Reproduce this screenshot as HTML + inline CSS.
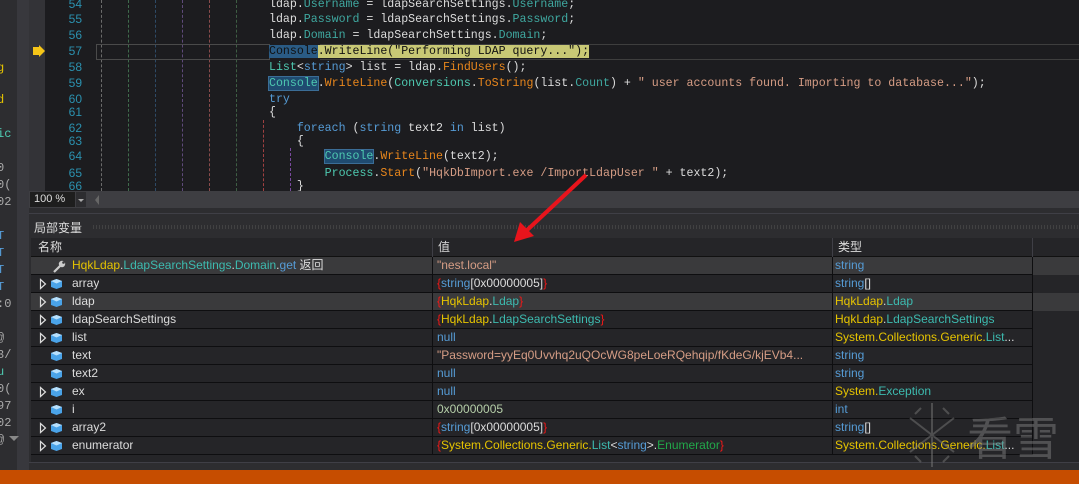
<!DOCTYPE html>
<html><head><meta charset="utf-8"><style>
*{margin:0;padding:0;box-sizing:border-box}
body{width:1079px;height:484px;overflow:hidden;background:#1c1c1f;position:relative;font-family:"Liberation Sans","Noto Sans CJK SC",sans-serif}
.a{position:absolute}
.code{position:absolute;left:269px;font:11.6px/15px "Liberation Mono","Noto Sans CJK SC",monospace;color:#dcdcdc;white-space:pre}
.num{position:absolute;left:50px;width:32px;text-align:right;font:12px/15px "Liberation Sans",sans-serif;color:#2b91af}
.k{color:#569cd6}.t{color:#4ec9b0}.p{color:#3fa8a0}.m{color:#e8861c}.s{color:#d69d85}
.hl{background:#1f4b70;outline:1px solid #3b6d96}
.g{position:absolute;top:0;height:191px;border-left:1px dashed}
.row{position:absolute;left:31px;width:1002px;height:18px;border-bottom:1px solid #0e0e10;font-size:12px;line-height:17px;color:#dcdcdc}
.c1,.c2,.c3{position:absolute;top:0;height:17px;white-space:nowrap;overflow:hidden}
.c1{left:41px}.c2{left:406px;width:396px}.c3{left:804px}
.sep1{position:absolute;left:401px;top:0;width:1px;height:18px;background:#0e0e10}
.sep2{position:absolute;left:801px;top:0;width:1px;height:18px;background:#0e0e10}
.y{color:#e6c400}.tq{color:#3dbbb0}.b{color:#569cd6}.r{color:#f21818}.gr{color:#22a84a}.st{color:#d69d85}
.ic{position:absolute;left:0;top:0}
</style></head><body>
<svg width="0" height="0" style="position:absolute"><defs>
<g id="cube"><path d="M20 6 L25.5 4 L31 6 L31 12 L25.5 14 L20 12 Z" fill="#4aa3e8"/><path d="M20 6 L25.5 4 L31 6 L25.5 8.5 Z" fill="#b8e0fc"/></g>
<g id="tri"><path d="M9.5 4.5 L14.5 9 L9.5 13.5 Z" fill="none" stroke="#ddd" stroke-width="1.2"/></g>
</defs></svg>
<div class="a" style="left:0;top:0;width:17px;height:470px;background:#2d2d30"></div>
<div class="a" style="left:17px;top:0;width:12px;height:470px;background:#38383d"></div>
<div class="a" style="left:0;top:0;width:17px;height:470px;font:12px/1 'Liberation Mono',monospace;overflow:hidden">
<div class="a" style="top:62px;left:-3px;color:#e6c400">g</div>
<div class="a" style="top:94px;left:-3px;color:#e6c400">d</div>
<div class="a" style="top:128px;left:-3px;color:#4ec9b0">ic</div>
<div class="a" style="top:162px;left:-3px;color:#aaa">0</div>
<div class="a" style="top:179px;left:-3px;color:#aaa">0(</div>
<div class="a" style="top:196px;left:-3px;color:#aaa">02</div>
<div class="a" style="top:230px;left:-3px;color:#569cd6">T</div>
<div class="a" style="top:247px;left:-3px;color:#569cd6">T</div>
<div class="a" style="top:264px;left:-3px;color:#569cd6">T</div>
<div class="a" style="top:281px;left:-3px;color:#569cd6">T</div>
<div class="a" style="top:298px;left:-3px;color:#aaa">:0</div>
<div class="a" style="top:332px;left:-3px;color:#aaa">@</div>
<div class="a" style="top:349px;left:-3px;color:#aaa">3/</div>
<div class="a" style="top:366px;left:-3px;color:#4ec9b0">u</div>
<div class="a" style="top:383px;left:-3px;color:#aaa">0(</div>
<div class="a" style="top:400px;left:-3px;color:#aaa">97</div>
<div class="a" style="top:417px;left:-3px;color:#aaa">02</div>
<div class="a" style="top:434px;left:-3px;color:#aaa">@</div>
</div>
<div class="a" style="left:9px;top:436px;border-top:5px solid #888;border-left:5px solid transparent;border-right:5px solid transparent"></div>
<div class="a" style="left:29px;top:0;width:16px;height:191px;background:#333337"></div>
<div class="a" style="left:33px;top:47px;width:6px;height:8px;background:#f5c518"></div>
<div class="a" style="left:39px;top:45px;border-left:6px solid #f5c518;border-top:6px solid transparent;border-bottom:6px solid transparent"></div>
<div class="g" style="left:101px;border-color:#6b6b6b"></div>
<div class="g" style="left:128px;border-color:#3f6b4c"></div>
<div class="g" style="left:155px;border-color:#2e4a66"></div>
<div class="g" style="left:182px;border-color:#5e4a7a"></div>
<div class="g" style="left:209px;border-color:#8a4b4b"></div>
<div class="g" style="left:236px;border-color:#3e5e44"></div>
<div class="a" style="left:263px;top:120px;height:71px;border-left:1px dashed #a04040"></div>
<div class="a" style="left:290px;top:148px;height:43px;border-left:1px dashed #7a4aa0"></div>
<div class="a" style="left:96px;top:44px;width:174px;height:16px;border:1px solid #4a4a4a"></div>
<div class="a" style="left:320px;top:44px;width:759px;height:16px;border-top:1px solid #3e3e3e;border-bottom:1px solid #3e3e3e"></div>
<div class="num" style="top:-3px">54</div><div class="num" style="top:12px">55</div><div class="num" style="top:28px">56</div><div class="num" style="top:44px">57</div><div class="num" style="top:60px">58</div><div class="num" style="top:76px">59</div><div class="num" style="top:92px">60</div><div class="num" style="top:105px">61</div><div class="num" style="top:121px">62</div><div class="num" style="top:134px">63</div><div class="num" style="top:149px">64</div><div class="num" style="top:166px">65</div><div class="num" style="top:179px">66</div>
<div class="code" style="top:-3px">ldap.<span class="p">Username</span> = ldapSearchSettings.<span class="p">Username</span>;</div>
<div class="code" style="top:12px">ldap.<span class="p">Password</span> = ldapSearchSettings.<span class="p">Password</span>;</div>
<div class="code" style="top:28px">ldap.<span class="p">Domain</span> = ldapSearchSettings.<span class="p">Domain</span>;</div>
<div class="code" style="top:44px;color:#111"><span style="background:#2a5b84">Console</span><span style="background:#c8c875">.WriteLine("Performing LDAP query...");</span></div>
<div class="code" style="top:60px"><span class="t">List</span>&lt;<span class="k">string</span>&gt; list = ldap.<span class="m">FindUsers</span>();</div>
<div class="code" style="top:76px"><span class="hl t">Console</span>.<span class="m">WriteLine</span>(<span class="t">Conversions</span>.<span class="m">ToString</span>(list.<span class="p">Count</span>) + <span class="s">" user accounts found. Importing to database..."</span>);</div>
<div class="code k" style="top:92px">try</div>
<div class="code" style="top:105px">{</div>
<div class="code" style="top:121px">    <span class="k">foreach</span> (<span class="k">string</span> text2 <span class="k">in</span> list)</div>
<div class="code" style="top:134px">    {</div>
<div class="code" style="top:149px">        <span class="hl t">Console</span>.<span class="m">WriteLine</span>(text2);</div>
<div class="code" style="top:166px">        <span class="t">Process</span>.<span class="m">Start</span>(<span class="s">"HqkDbImport.exe /ImportLdapUser "</span> + text2);</div>
<div class="code" style="top:179px">    }</div>
<div class="a" style="left:29px;top:191px;width:1050px;height:17px;background:#3e3e42"></div>
<div class="a" style="left:30px;top:192px;width:45px;height:15px;background:#1e1e1e;color:#ddd;font-size:11px;line-height:15px;padding-left:4px">100 %</div>
<div class="a" style="left:76px;top:192px;width:10px;height:15px;background:#2d2d30"></div>
<div class="a" style="left:78px;top:199px;border-top:3px solid #aaa;border-left:3px solid transparent;border-right:3px solid transparent"></div>
<div class="a" style="left:95px;top:195px;border-right:4px solid #666;border-top:5px solid transparent;border-bottom:5px solid transparent"></div>
<div class="a" style="left:29px;top:208px;width:1050px;height:262px;background:#2d2d30"></div>
<div class="a" style="left:29px;top:213px;width:1050px;height:1px;background:#3f3f46"></div>
<div class="a" style="left:34px;top:219px;color:#ddd;font-size:12px">局部变量</div>
<div class="a" style="left:92px;top:225px;width:987px;height:4px;background-image:radial-gradient(#555 0.6px,transparent 0.8px);background-size:3px 2px"></div>
<div class="a" style="left:31px;top:238px;width:1048px;height:224px;background:#252528"></div>
<div class="a" style="left:31px;top:238px;width:1048px;height:19px;background:#252528;border-bottom:1px solid #111;color:#ddd;font-size:12px;line-height:18px">
<span class="a" style="left:7px">名称</span><span class="a" style="left:407px">值</span><span class="a" style="left:807px">类型</span>
<div class="a" style="left:401px;top:0;width:1px;height:19px;background:#3f3f46"></div><div class="a" style="left:801px;top:0;width:1px;height:19px;background:#3f3f46"></div><div class="a" style="left:1001px;top:0;width:1px;height:19px;background:#3f3f46"></div></div>
<div class="a" style="left:31px;top:257px;width:1048px;height:18px;background:#3a3a3c"></div>
<div class="a" style="left:31px;top:293px;width:1048px;height:18px;background:#3a3a3c"></div>
<div class="a" style="left:1032px;top:257px;width:1px;height:198px;background:#0e0e10"></div>

<div class="row" style="top:257px"><svg class="ic" width="40" height="18"><path d="M23 15 L29 9" stroke="#ccc" stroke-width="2.2"/><circle cx="31" cy="7" r="3.2" fill="#ccc"/><circle cx="32.5" cy="5.5" r="1.3" fill="#3a3a3c"/></svg><div class="c1"><span class="y">HqkLdap</span>.<span class="tq">LdapSearchSettings</span>.<span class="tq">Domain</span>.<span class="b">get</span> 返回</div><div class="sep1"></div><div class="c2 st">"nest.local"</div><div class="sep2"></div><div class="c3 b">string</div></div>
<div class="row" style="top:275px"><svg class="ic" width="40" height="18"><use href="#tri"/><use href="#cube"/></svg><div class="c1">array</div><div class="sep1"></div><div class="c2"><span class="r">{</span><span class="b">string</span>[0x00000005]<span class="r">}</span></div><div class="sep2"></div><div class="c3 b">string<span style="color:#ddd">[]</span></div></div>
<div class="row" style="top:293px"><svg class="ic" width="40" height="18"><use href="#tri"/><use href="#cube"/></svg><div class="c1">ldap</div><div class="sep1"></div><div class="c2"><span class="r">{</span><span class="y">HqkLdap</span>.<span class="tq">Ldap</span><span class="r">}</span></div><div class="sep2"></div><div class="c3"><span class="y">HqkLdap</span>.<span class="tq">Ldap</span></div></div>
<div class="row" style="top:311px"><svg class="ic" width="40" height="18"><use href="#tri"/><use href="#cube"/></svg><div class="c1">ldapSearchSettings</div><div class="sep1"></div><div class="c2"><span class="r">{</span><span class="y">HqkLdap</span>.<span class="tq">LdapSearchSettings</span><span class="r">}</span></div><div class="sep2"></div><div class="c3"><span class="y">HqkLdap</span>.<span class="tq">LdapSearchSettings</span></div></div>
<div class="row" style="top:329px"><svg class="ic" width="40" height="18"><use href="#tri"/><use href="#cube"/></svg><div class="c1">list</div><div class="sep1"></div><div class="c2 b">null</div><div class="sep2"></div><div class="c3"><span class="y">System.Collections.Generic.</span><span class="tq">List</span>...</div></div>
<div class="row" style="top:347px"><svg class="ic" width="40" height="18"><use href="#cube"/></svg><div class="c1">text</div><div class="sep1"></div><div class="c2 st">"Password=yyEq0Uvvhq2uQOcWG8peLoeRQehqip/fKdeG/kjEVb4...</div><div class="sep2"></div><div class="c3 b">string</div></div>
<div class="row" style="top:365px"><svg class="ic" width="40" height="18"><use href="#cube"/></svg><div class="c1">text2</div><div class="sep1"></div><div class="c2 b">null</div><div class="sep2"></div><div class="c3 b">string</div></div>
<div class="row" style="top:383px"><svg class="ic" width="40" height="18"><use href="#tri"/><use href="#cube"/></svg><div class="c1">ex</div><div class="sep1"></div><div class="c2 b">null</div><div class="sep2"></div><div class="c3"><span class="y">System.</span><span class="tq">Exception</span></div></div>
<div class="row" style="top:401px"><svg class="ic" width="40" height="18"><use href="#cube"/></svg><div class="c1">i</div><div class="sep1"></div><div class="c2" style="color:#b5cea8">0x00000005</div><div class="sep2"></div><div class="c3 b">int</div></div>
<div class="row" style="top:419px"><svg class="ic" width="40" height="18"><use href="#tri"/><use href="#cube"/></svg><div class="c1">array2</div><div class="sep1"></div><div class="c2"><span class="r">{</span><span class="b">string</span>[0x00000005]<span class="r">}</span></div><div class="sep2"></div><div class="c3 b">string<span style="color:#ddd">[]</span></div></div>
<div class="row" style="top:437px"><svg class="ic" width="40" height="18"><use href="#tri"/><use href="#cube"/></svg><div class="c1">enumerator</div><div class="sep1"></div><div class="c2"><span class="r">{</span><span class="y">System.Collections.Generic.</span><span class="tq">List</span>&lt;<span class="b">string</span>&gt;.<span class="gr">Enumerator</span><span class="r">}</span></div><div class="sep2"></div><div class="c3"><span class="y">System.Collections.Generic.</span><span class="tq">List</span>...</div></div>
<div class="a" style="left:29px;top:462px;width:1050px;height:8px;background:#2d2d30;border-top:1px solid #3f3f46"></div>
<svg class="a" style="left:905px;top:400px" width="175" height="70">
<g stroke="#777" stroke-width="2" opacity="0.5" fill="none">
<line x1="27" y1="3" x2="27" y2="67"/><line x1="5" y1="18" x2="49" y2="52"/><line x1="5" y1="52" x2="49" y2="18"/>
<line x1="16" y1="8" x2="10" y2="14"/><line x1="38" y1="8" x2="44" y2="14"/><line x1="16" y1="62" x2="10" y2="56"/><line x1="38" y1="62" x2="44" y2="56"/>
</g>
<text x="62" y="55" font-family="Noto Sans CJK SC,sans-serif" font-size="46" fill="#888" opacity="0.45">看雪</text>
</svg>
<svg class="a" style="left:0;top:0" width="1079" height="484">
<line x1="586" y1="175" x2="524" y2="233" stroke="#e8141c" stroke-width="4"/>
<polygon points="514,242 520,222 534,236" fill="#e8141c"/>
</svg>
<div class="a" style="left:0;top:470px;width:1079px;height:14px;background:#c64d00"></div>
</body></html>
